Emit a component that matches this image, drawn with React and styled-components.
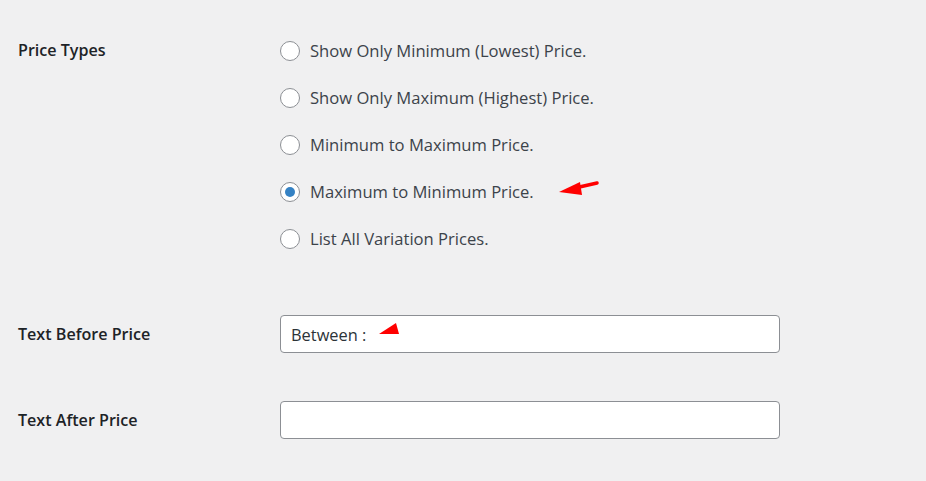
import styled, { createGlobalStyle } from 'styled-components'

const GlobalStyle = createGlobalStyle`
  html, body {
    margin: 0;
    padding: 0;
    background: #f0f0f1;
  }
  body {
    font-family: "Open Sans", "Noto Sans", sans-serif;
    color: #3c434a;
  }
`;

const Page = styled.div`
  position: relative;
  width: 926px;
  height: 481px;
  overflow: hidden;
  padding: 27px 0 0 18px;
  box-sizing: border-box;
`;

const FormRow = styled.div`
  display: grid;
  grid-template-columns: 262px 500px;
  align-items: ${p => (p.$top ? 'start' : 'center')};
  margin-bottom: ${p => p.$gap || 0}px;
`;

const RowLabel = styled.div`
  font-size: 16.1px;
  font-weight: 600;
  color: #1d2327;
  line-height: ${p => p.$lh || 38}px;
`;

const RadioList = styled.div`
  display: flex;
  flex-direction: column;
`;

const RadioRow = styled.label`
  display: flex;
  align-items: center;
  gap: 10px;
  height: 47px;
  font-size: 16.6px;
  color: #3c434a;
`;

const RadioCircle = styled.span`
  width: 20px;
  height: 20px;
  box-sizing: border-box;
  border: 1px solid #8c8f94;
  border-radius: 50%;
  background: #fff;
  display: flex;
  align-items: center;
  justify-content: center;
  flex-shrink: 0;

  &::after {
    content: '';
    display: ${p => (p.$checked ? 'block' : 'none')};
    width: 10px;
    height: 10px;
    border-radius: 50%;
    background: #3582c4;
  }
`;

const TextInput = styled.div`
  height: 38px;
  box-sizing: border-box;
  border: 1px solid #8c8f94;
  border-radius: 4px;
  background: #fff;
  padding: 0 10px;
  display: flex;
  align-items: center;
  font-size: 16.4px;
  color: #2c3338;
`;

const Annotations = styled.svg`
  position: absolute;
  left: 0;
  top: 0;
  pointer-events: none;
`;

const options = [
  { text: 'Show Only Minimum (Lowest) Price.' },
  { text: 'Show Only Maximum (Highest) Price.' },
  { text: 'Minimum to Maximum Price.' },
  { text: 'Maximum to Minimum Price.', checked: true },
  { text: 'List All Variation Prices.' },
];

function App() {
  return (
    <Page>
      <GlobalStyle />

      <FormRow $top $gap={53}>
        <RowLabel $lh={47}>Price Types</RowLabel>
        <RadioList>
          {options.map(o => (
            <RadioRow key={o.text}>
              <RadioCircle $checked={o.checked} />
              {o.text}
            </RadioRow>
          ))}
        </RadioList>
      </FormRow>

      <FormRow $gap={48}>
        <RowLabel>Text Before Price</RowLabel>
        <TextInput>Between :</TextInput>
      </FormRow>

      <FormRow>
        <RowLabel>Text After Price</RowLabel>
        <TextInput />
      </FormRow>

      {/* red arrows drawn on top of the screenshot */}
      <Annotations width="926" height="481">
        <line x1="597" y1="183" x2="575" y2="188" stroke="#ff0000" strokeWidth="3.5" strokeLinecap="round" />
        <polygon points="559,192 580,182 582,195" fill="#ff0000" />
        <polygon points="379,334 396,323 399,334" fill="#ff0000" />
      </Annotations>
    </Page>
  )
}

export default App
